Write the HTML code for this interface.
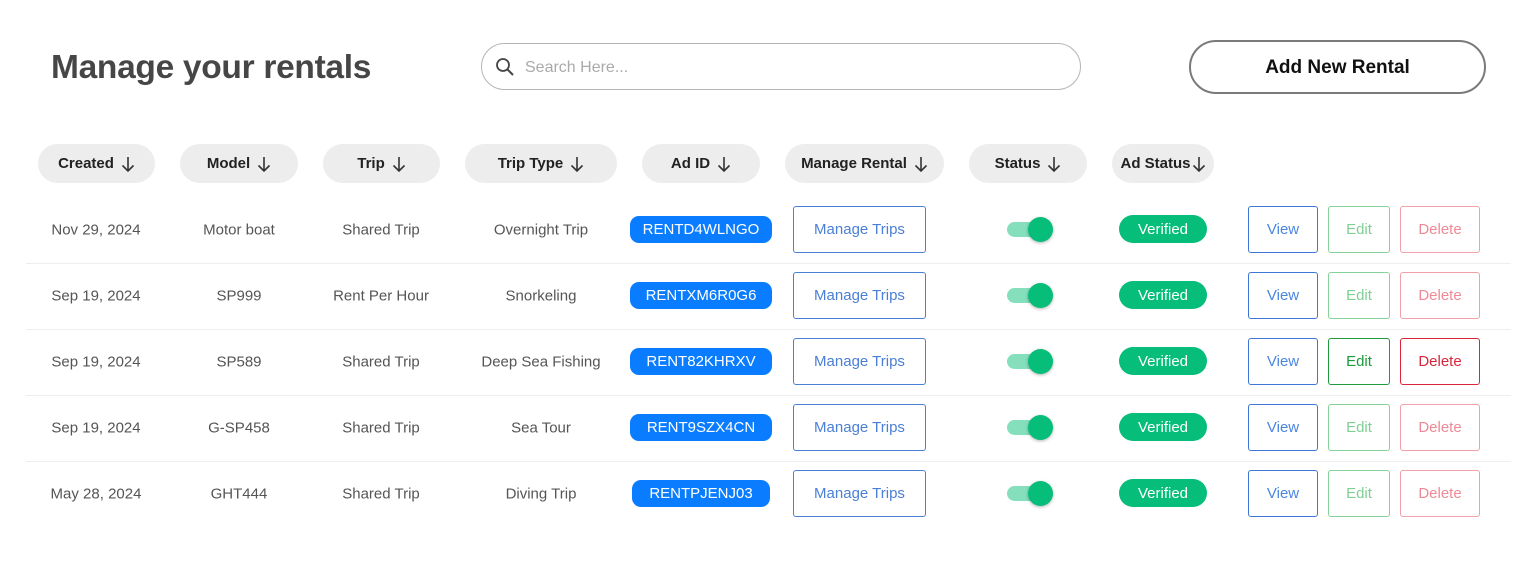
<!DOCTYPE html>
<html><head><style>
*{box-sizing:border-box;margin:0;padding:0}
body{width:1522px;height:562px;background:#fff;font-family:"Liberation Sans",Arial,sans-serif;position:relative;overflow:hidden}
.a{position:absolute}
h1{position:absolute;left:51px;top:49px;font-size:33.5px;font-weight:bold;color:#464646;letter-spacing:-0.3px}
.search{left:481px;top:43px;width:600px;height:47px;border:1px solid #b5b5b5;border-radius:24px}
.search span{position:absolute;left:43px;top:15px;font-size:16px;color:#aaa}
.add{left:1189px;top:40px;width:297px;height:54px;border:2px solid #7a7a7a;border-radius:27px;font-size:19px;font-weight:bold;color:#111;display:flex;align-items:center;justify-content:center;padding-top:2px}
.h{top:144px;height:39px;background:#ededed;border-radius:20px;display:flex;align-items:center;justify-content:center;font-size:15px;font-weight:bold;color:#222;gap:7px}
.c{font-size:15px;color:#555;text-align:center;transform:translateY(-45%)}
.sep{left:26px;width:1485px;height:1px;background:#eee}
.id{height:27px;background:#0a7cff;color:#fff;border-radius:9px;font-size:15px;display:flex;align-items:center;justify-content:center}
.btn{height:47px;border:1px solid;border-radius:3px;display:flex;align-items:center;justify-content:center;font-size:15px}
.ver{width:88px;height:28px;background:#06bd7a;color:#fff;border-radius:14px;font-size:15px;display:flex;align-items:center;justify-content:center}
.tr{width:34px;height:15px;background:#85dfbd;border-radius:8px}
.kn{width:25px;height:25px;background:#06bd7a;border-radius:50%;box-shadow:0 1px 3px rgba(0,0,0,.3)}
</style></head><body>
<h1>Manage your rentals</h1>
<div class="a search"><svg class="a" style="left:13px;top:13px" width="20" height="20" viewBox="0 0 20 20"><circle cx="8" cy="8" r="6" fill="none" stroke="#444" stroke-width="1.8"/><path d="M12.5 12.5L18 18" stroke="#444" stroke-width="2"/></svg><span>Search Here...</span></div>
<div class="a add">Add New Rental</div>

<div id="hd"></div>
<div id="rows"></div>
<script>
var ar='<svg width="14" height="16" viewBox="0 0 14 16"><path d="M7 1V15M1.5 9.5L7 15L12.5 9.5" fill="none" stroke="#333" stroke-width="1.6"/></svg>';
var hs=[["Created",38,117],["Model",180,118],["Trip",323,117],["Trip Type",465,152],["Ad ID",642,118],["Manage Rental",785,159],["Status",969,118],["Ad Status",1112,102]];
var g="";hs.forEach(function(x,i){g+='<div class="a h" style="left:'+x[1]+'px;width:'+x[2]+'px'+(i==7?';gap:1px':'')+'">'+x[0]+ar+'</div>';});
document.getElementById("hd").innerHTML=g;
var d=[["Nov 29, 2024","Motor boat","Shared Trip","Overnight Trip","RENTD4WLNGO",0],
["Sep 19, 2024","SP999","Rent Per Hour","Snorkeling","RENTXM6R0G6",0],
["Sep 19, 2024","SP589","Shared Trip","Deep Sea Fishing","RENT82KHRXV",1],
["Sep 19, 2024","G-SP458","Shared Trip","Sea Tour","RENT9SZX4CN",0],
["May 28, 2024","GHT444","Shared Trip","Diving Trip","RENTPJENJ03",0]];
var h="",cx=[96,239,381,541];
d.forEach(function(r,i){var y=229+66*i;
for(var k=0;k<4;k++)h+='<div class="a c" style="left:'+(cx[k]-90)+'px;width:180px;top:'+y+'px">'+r[k]+'</div>';
var w=i==4?138:142;h+='<div class="a id" style="left:'+(701-w/2)+'px;width:'+w+'px;top:'+(y-13)+'px">'+r[4]+'</div>';
h+='<div class="a btn" style="left:793px;width:133px;top:'+(y-23)+'px;border-color:#4a7fd6;color:#4a7fd6">Manage Trips</div>';
h+='<div class="a tr" style="left:1007px;top:'+(y-7)+'px"></div><div class="a kn" style="left:1028px;top:'+(y-12)+'px"></div>';
h+='<div class="a ver" style="left:1119px;top:'+(y-14)+'px">Verified</div>';
h+='<div class="a btn" style="left:1248px;width:70px;top:'+(y-23)+'px;border-color:#3d76d6;color:#4a85e0">View</div>';
var e=r[5];
h+='<div class="a btn" style="left:1328px;width:62px;top:'+(y-23)+'px;border-color:'+(e?'#1c9a3c':'#86d39a')+';color:'+(e?'#1c9a3c':'#7fcf93')+'">Edit</div>';
h+='<div class="a btn" style="left:1400px;width:80px;top:'+(y-23)+'px;border-color:'+(e?'#d9263a':'#f0a0a8')+';color:'+(e?'#d9263a':'#ee8a95')+'">Delete</div>';
if(i<4)h+='<div class="a sep" style="top:'+(y+34)+'px"></div>';});
document.getElementById("rows").innerHTML=h;
</script>
</body></html>
